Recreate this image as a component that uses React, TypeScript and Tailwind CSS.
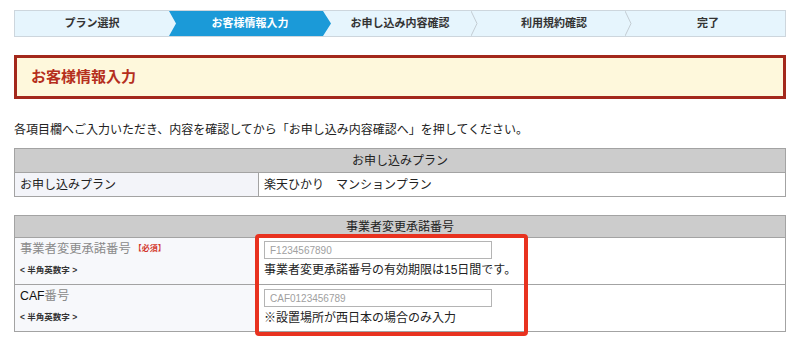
import * as React from "react"

const STEPS = ["プラン選択", "お客様情報入力", "お申し込み内容確認", "利用規約確認", "完了"]
const ACTIVE = 1

function StepBar() {
  return (
    <div className="flex h-[27px] border border-[#cdd6dd] bg-[#e6f5fd]">
      {STEPS.map((label, i) => (
        <div key={label} className="relative flex-1 flex items-center justify-center">
          {i === ACTIVE && (
            <div className="absolute inset-y-0 left-0 -right-[8px] z-10 bg-[#1b9ad8] [clip-path:polygon(0_0,calc(100%-8px)_0,100%_50%,calc(100%-8px)_100%,0_100%,7px_50%)]" />
          )}
          <span
            className={`relative z-20 text-[11px] font-bold ${i === ACTIVE ? "text-white pl-2" : "text-[#333]"}`}
          >
            {label}
          </span>
          {i !== ACTIVE && i !== ACTIVE - 1 && i < STEPS.length - 1 && (
            <svg className="absolute top-0 -right-[1px] h-full w-[7px] z-10" viewBox="0 0 7 25" preserveAspectRatio="none">
              <polyline points="0,0 6,12.5 0,25" fill="none" stroke="#c3ccd3" strokeWidth="1" />
            </svg>
          )}
        </div>
      ))}
    </div>
  )
}

function Note({ children }: { children: React.ReactNode }) {
  return <div className="text-[8.5px] font-bold text-[#333] mt-[6px]">{children}</div>
}

export default function App() {
  return (
    <div className="w-[800px] h-[343px] bg-white overflow-hidden px-[14px] pt-[10px] text-[#222] [text-spacing-trim:space-all] [font-family:'Liberation_Sans','Noto_Sans_CJK_JP',sans-serif]">
      <StepBar />

      <div className="mt-[18px] h-[44px] border-[3px] border-[#a3281b] bg-[#fef8dc] flex items-center pl-[14px]">
        <h1 className="text-[15px] font-bold text-[#b52f1c]">お客様情報入力</h1>
      </div>

      <p className="mt-[23px] text-[12px] leading-[16px] text-[#222]">
        各項目欄へご入力いただき、内容を確認してから「お申し込み内容確認へ」を押してください。
      </p>

      <table className="mt-[10px] w-full border-collapse text-[12px]">
        <tbody>
          <tr className="h-[24px]">
            <th colSpan={2} className="border border-[#a3a3a3] bg-[#cccccc] font-normal text-center">
              お申し込みプラン
            </th>
          </tr>
          <tr className="h-[24px]">
            <td className="w-[244px] border border-[#a3a3a3] bg-[#f3f4f9] pl-[5px]">お申し込みプラン</td>
            <td className="border border-[#a3a3a3] pl-[5px]">楽天ひかり　マンションプラン</td>
          </tr>
        </tbody>
      </table>

      <div className="relative mt-[18px]">
        <table className="w-full border-collapse text-[12px]">
          <tbody>
            <tr className="h-[22px]">
              <th colSpan={2} className="border border-[#a3a3a3] bg-[#cccccc] font-normal text-center">
                事業者変更承諾番号
              </th>
            </tr>
            <tr className="h-[47px]">
              <td className="w-[244px] border border-[#a3a3a3] bg-[#f7f8fb] pl-[5px] align-top pt-[2px]">
                <div className="flex items-center">
                  <span className="text-[12.3px] text-[#8a8a8a]">事業者変更承諾番号</span>
                  <span className="ml-[3px] text-[8px] font-bold text-[#d3372c]">【必須】</span>
                </div>
                <Note>&lt; 半角英数字 &gt;</Note>
              </td>
              <td className="border border-[#a3a3a3] pl-[5px] align-top pt-[3px]">
                <input
                  className="block w-[228px] h-[18px] border border-[#b4b4b4] px-[5px] text-[10px] placeholder:text-[#a0a0a0] outline-none"
                  placeholder="F1234567890"
                />
                <div className="mt-[3px] leading-[16px]">事業者変更承諾番号の有効期限は15日間です。</div>
              </td>
            </tr>
            <tr className="h-[47px]">
              <td className="border border-[#a3a3a3] bg-[#f7f8fb] pl-[5px] align-top pt-[2px]">
                <div className="text-[12.3px]">
                  <span className="text-[#111]">CAF</span>
                  <span className="text-[#8a8a8a]">番号</span>
                </div>
                <Note>&lt; 半角英数字 &gt;</Note>
              </td>
              <td className="border border-[#a3a3a3] pl-[5px] align-top pt-[4px]">
                <input
                  className="block w-[228px] h-[18px] border border-[#b4b4b4] px-[5px] text-[10px] placeholder:text-[#a0a0a0] outline-none"
                  placeholder="CAF0123456789"
                />
                <div className="mt-[3px] leading-[16px]">※設置場所が西日本の場合のみ入力</div>
              </td>
            </tr>
          </tbody>
        </table>
        <div className="pointer-events-none absolute left-[241px] top-[19px] w-[273px] h-[102px] border-[4px] border-[#e8321f] rounded-[4px]" />
      </div>
    </div>
  )
}
